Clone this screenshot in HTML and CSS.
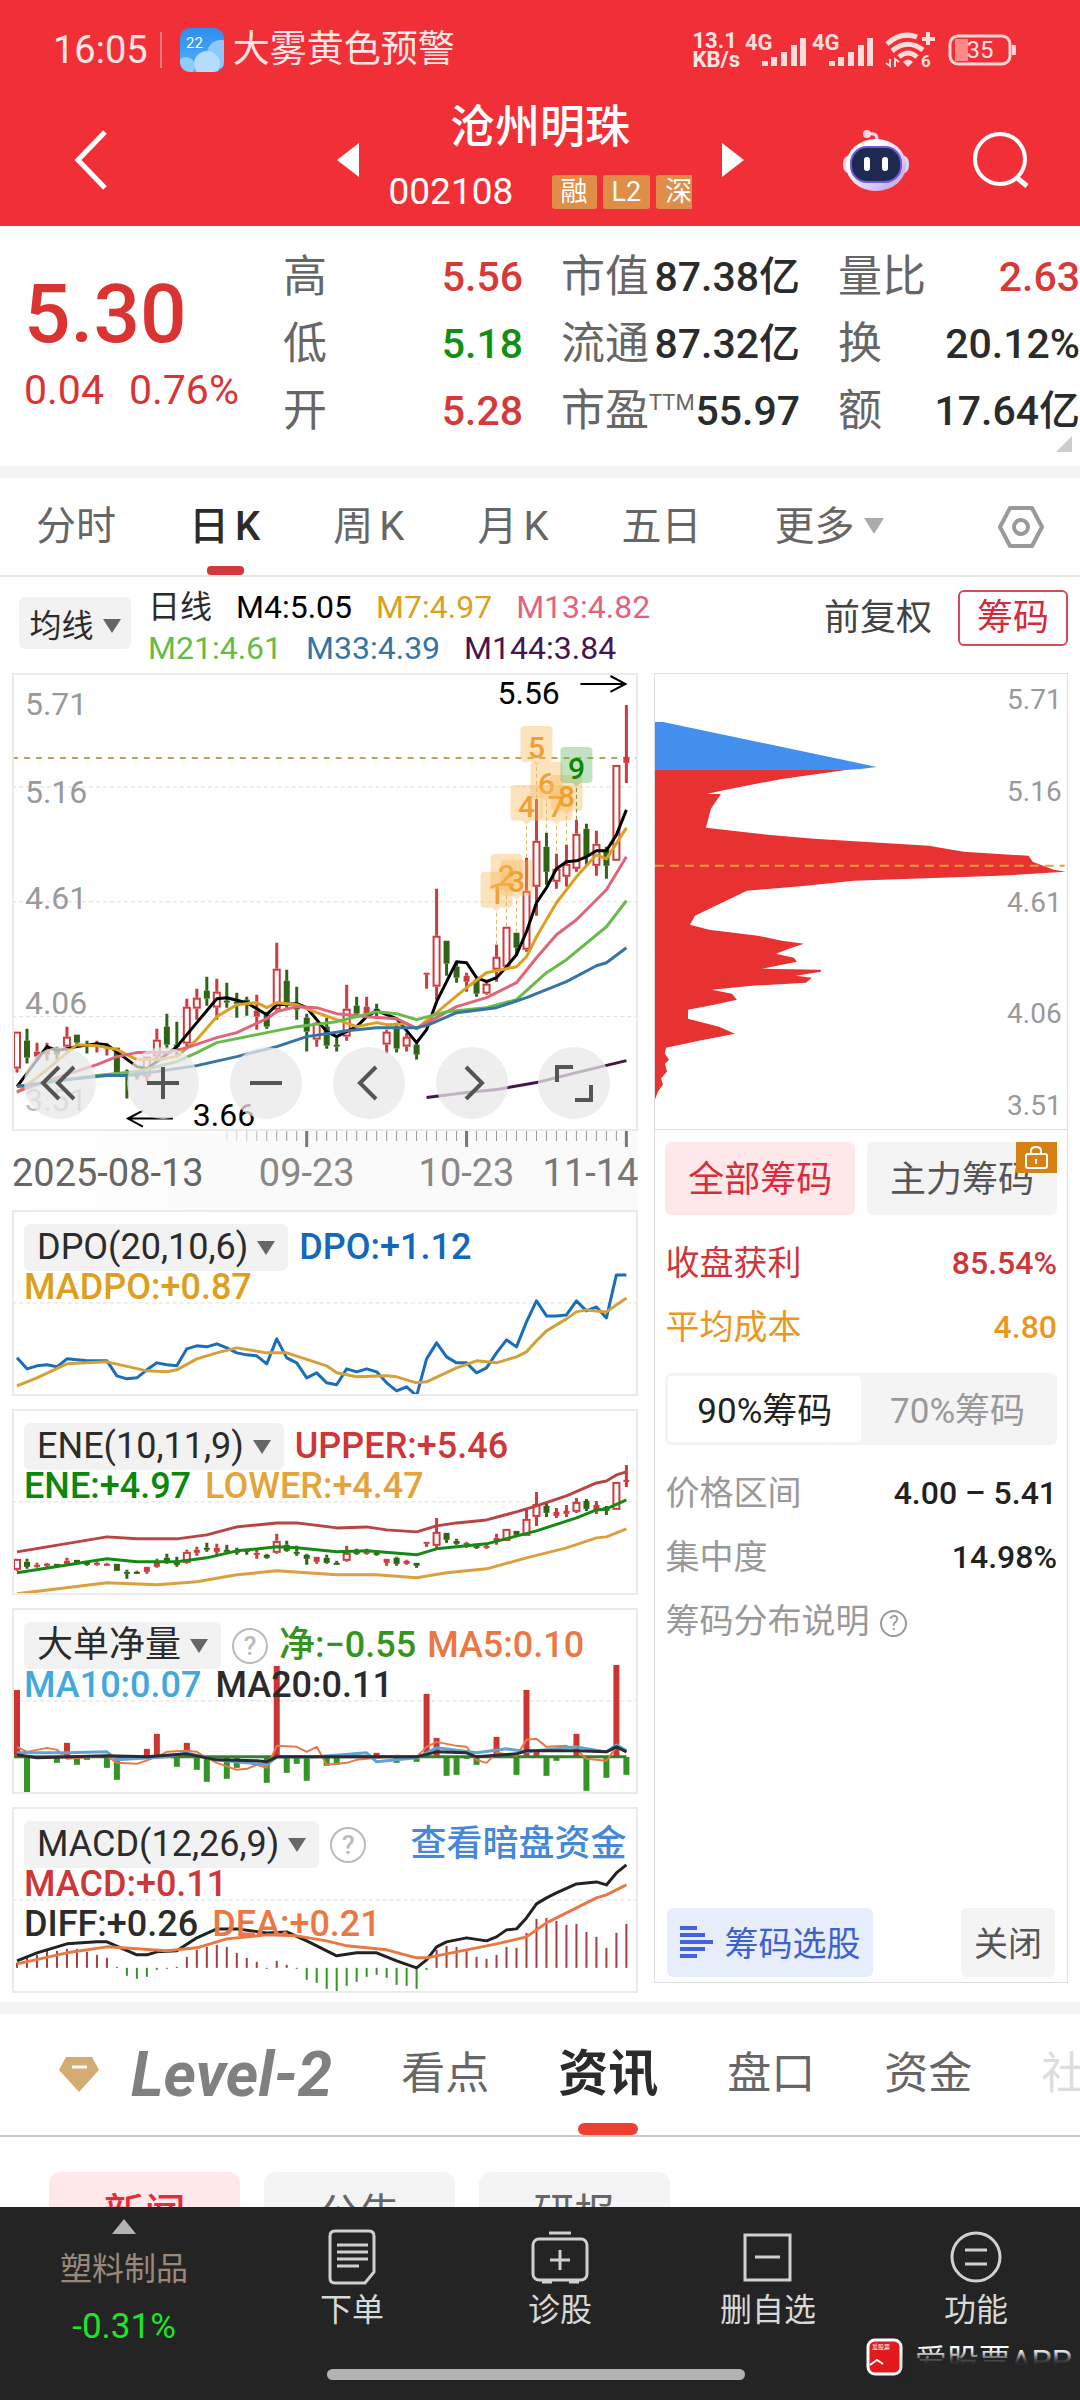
FILE: index.html
```html
<!DOCTYPE html>
<html lang="zh-CN">
<head>
    <meta charset="UTF-8">
    <meta name="viewport" content="width=device-width, initial-scale=1.0">
    <title>沧州明珠 002108</title>
    <link rel="stylesheet" href="styles.css">
</head>
<body>
    <header class="header">
        <div class="status">
            <span class="time">16:05</span>
            <span class="divider"></span>
            <svg class="weather" viewBox="0 0 44 44">
                <defs>
                    <linearGradient id="sky" x1="0" y1="0" x2="0" y2="1"><stop offset="0" stop-color="#2f8df0"/><stop offset="1" stop-color="#4db5fa"/></linearGradient>
                    <clipPath id="round"><rect width="44" height="44" rx="10"/></clipPath>
                </defs>
                <g clip-path="url(#round)">
                    <rect width="44" height="44" fill="url(#sky)"/>
                    <circle cx="41" cy="26" r="14" fill="#8cc9f8"/>
                    <circle cx="6" cy="38" r="9" fill="#8fcdf9"/>
                    <circle cx="27" cy="36" r="13" fill="#b5dcfb"/>
                </g>
                <text x="6" y="20" font-size="15" fill="#fff">22</text>
            </svg>
            <span class="alert">大雾黄色预警</span>
            <div class="signals">
                <span class="speed">13.1<br>KB/s</span>
                <svg width="62" height="38" viewBox="0 0 62 38" fill="#ffdcdc">
                    <text x="0" y="19" font-size="22" font-weight="700">4G</text>
                    <path d="M17 30h6v5h-6zM26 26h6v9h-6zM36 21h6v14h-6zM46 14h6v21h-6zM55 7h6v28h-6z"/>
                </svg>
                <svg width="62" height="38" viewBox="0 0 62 38" fill="#ffdcdc">
                    <text x="0" y="19" font-size="22" font-weight="700">4G</text>
                    <path d="M17 30h6v5h-6zM26 26h6v9h-6zM36 21h6v14h-6zM46 14h6v21h-6zM55 7h6v28h-6z"/>
                </svg>
                <svg class="wifi" width="50" height="38" viewBox="0 0 50 38" fill="none" stroke="#ffdcdc">
                    <path d="M2 13Q16 0 32 6M7 20Q22 7 38 19M14 26Q23 18 32 26" stroke-width="5"/>
                    <path d="M18 31q5-5 10 0l-5 5z" fill="#ffdcdc" stroke="none"/>
                    <path d="M43 1v13M37 8h13" stroke-width="4"/>
                    <path d="M5 28v7l-4-3M10 36v-8l4 3" stroke-width="2"/>
                    <text x="36" y="36" font-size="17" font-weight="700" fill="#ffdcdc" stroke="none">6</text>
                </svg>
                <svg width="70" height="32" viewBox="0 0 70 32">
                    <rect x="7" y="5" width="13" height="22" fill="#f88"/>
                    <rect x="2" y="2" width="60" height="28" rx="8" fill="none" stroke="#ffd5d5" stroke-width="3"/>
                    <path d="M66 11v10" stroke="#ffd5d5" stroke-width="4"/>
                    <text x="32" y="24" font-size="24" text-anchor="middle" fill="#ffe3e3">35</text>
                </svg>
            </div>
        </div>
        <div class="titlebar">
            <button class="back" aria-label="返回">
                <svg width="34" height="60" viewBox="0 0 34 60"><path d="M31 2L4 30l27 28" fill="none" stroke="#fff" stroke-width="5"/></svg>
            </button>
            <div class="stock">
                <button aria-label="上一只"><svg width="22" height="34" viewBox="0 0 22 34"><path d="M22 0v34L0 17z" fill="#fff"/></svg></button>
                <div class="stock-name">
                    <h1>沧州明珠</h1>
                    <div class="stock-code">
                        <span>002108</span>
                        <div class="tags"><i>融</i><i>L2</i><i>深</i></div>
                    </div>
                </div>
                <button aria-label="下一只"><svg width="22" height="34" viewBox="0 0 22 34"><path d="M0 0v34l22-17z" fill="#fff"/></svg></button>
            </div>
            <div class="actions">
                <button aria-label="助手">
                    <svg width="68" height="62" viewBox="0 0 68 62">
                        <defs><linearGradient id="shell" x1="0" y1="0" x2="1" y2="1"><stop offset="0.3" stop-color="#fff"/><stop offset="0.8" stop-color="#c9b4f5"/></linearGradient></defs>
                        <path d="M26 5q10-2 9 7" fill="none" stroke="#ffd5e2" stroke-width="3"/>
                        <circle cx="25" cy="5" r="4" fill="#ffd5e2"/>
                        <rect x="1" y="26" width="66" height="19" rx="8" fill="#ddd3fa"/>
                        <ellipse cx="34" cy="36" rx="30" ry="26" fill="url(#shell)"/>
                        <rect x="9" y="18" width="50" height="35" rx="16" fill="#1e2950" stroke="#6f58d8" stroke-width="2"/>
                        <rect x="22" y="28" width="6" height="14" rx="3" fill="#fff"/>
                        <rect x="40" y="28" width="6" height="14" rx="3" fill="#fff"/>
                    </svg>
                </button>
                <button aria-label="搜索">
                    <svg width="58" height="58" viewBox="0 0 58 58" fill="none" stroke="#fff" stroke-width="4"><circle cx="28" cy="28" r="25"/><path d="M44 46l11 9" stroke-width="5"/></svg>
                </button>
            </div>
        </div>
    </header>

    <section class="quote">
        <div class="price">
            <strong>5.30</strong>
            <div class="change"><span>0.04</span><span>0.76%</span></div>
        </div>
        <dl>
            <div><dt>高</dt><dd class="up">5.56</dd></div>
            <div><dt>低</dt><dd class="down">5.18</dd></div>
            <div><dt>开</dt><dd class="up">5.28</dd></div>
        </dl>
        <dl>
            <div><dt>市值</dt><dd>87.38亿</dd></div>
            <div><dt>流通</dt><dd>87.32亿</dd></div>
            <div><dt>市盈<sup>TTM</sup></dt><dd>55.97</dd></div>
        </dl>
        <dl class="last">
            <div><dt>量比</dt><dd class="up">2.63</dd></div>
            <div><dt>换</dt><dd>20.12%</dd></div>
            <div><dt>额</dt><dd>17.64亿</dd></div>
        </dl>
        <span class="corner"></span>
    </section>

    <nav class="period">
        <button>分时</button>
        <button class="active">日<span class="k">K</span></button>
        <button>周<span class="k">K</span></button>
        <button>月<span class="k">K</span></button>
        <button>五日</button>
        <button>更多<span class="caret"></span></button>
        <button class="setting" aria-label="设置">
            <svg width="46" height="44" viewBox="0 0 46 44" fill="none" stroke="#999" stroke-width="4" stroke-linejoin="round"><path d="M12 3h22l10 19-10 19H12L2 22z"/><circle cx="23" cy="22" r="7"/></svg>
        </button>
    </nav>

    <section class="ma-bar">
        <button class="pill">均线<span class="caret"></span></button>
        <div class="ma-list">
            <span>日线</span>
            <span class="c-black">M4:5.05</span>
            <span class="c-gold">M7:4.97</span>
            <span class="c-pink">M13:4.82</span>
            <span class="c-lime">M21:4.61</span>
            <span class="c-steel">M33:4.39</span>
            <span class="c-purple">M144:3.84</span>
        </div>
        <button class="plain">前复权</button>
        <button class="chip-toggle">筹码</button>
    </section>

    <main class="board">
        <div class="charts">
            <div class="chart main-chart">
                <svg id="kline" viewBox="0 0 627 457"></svg>
                <div class="tools">
                    <button aria-label="最左"><svg viewBox="0 0 72 72"><path d="M35 20L19 36l16 16M50 20L34 36l16 16"/></svg></button>
                    <button aria-label="放大"><svg viewBox="0 0 72 72"><path d="M36 20v32M20 36h32"/></svg></button>
                    <button aria-label="缩小"><svg viewBox="0 0 72 72"><path d="M20 36h32"/></svg></button>
                    <button aria-label="左移"><svg viewBox="0 0 72 72"><path d="M43 20L27 36l16 16"/></svg></button>
                    <button aria-label="右移"><svg viewBox="0 0 72 72"><path d="M30 20l16 16-16 16"/></svg></button>
                    <button aria-label="全屏"><svg viewBox="0 0 72 72"><path d="M19 35V20h16M53 38v15H37"/></svg></button>
                </div>
            </div>
            <div class="axis"><svg id="axis" viewBox="0 0 627 80"></svg></div>

            <div class="chart sub">
                <svg id="dpo" viewBox="0 0 627 186"></svg>
                <div class="legend">
                    <div><button class="pill">DPO(20,10,6)<span class="caret"></span></button><span class="c-blue">DPO:+1.12</span></div>
                    <div><span class="c-gold">MADPO:+0.87</span></div>
                </div>
            </div>
            <div class="chart sub">
                <svg id="ene" viewBox="0 0 627 186"></svg>
                <div class="legend">
                    <div><button class="pill">ENE(10,11,9)<span class="caret"></span></button><span class="c-red">UPPER:+5.46</span></div>
                    <div><span class="c-green">ENE:+4.97</span><span class="c-amber">LOWER:+4.47</span></div>
                </div>
            </div>
            <div class="chart sub">
                <svg id="net" viewBox="0 0 627 186"></svg>
                <div class="legend">
                    <div><button class="pill">大单净量<span class="caret"></span></button><button class="help">?</button><span class="c-leaf">净:−0.55</span><span class="c-orange">MA5:0.10</span></div>
                    <div><span class="c-sky">MA10:0.07</span><span>MA20:0.11</span></div>
                </div>
            </div>
            <div class="chart sub">
                <svg id="macd" viewBox="0 0 627 186"></svg>
                <div class="legend">
                    <div><button class="pill">MACD(12,26,9)<span class="caret"></span></button><button class="help">?</button><a class="dark-pool" href="#">查看暗盘资金</a></div>
                    <div><span class="c-red">MACD:+0.11</span></div>
                    <div><span>DIFF:+0.26</span><span class="c-orange">DEA:+0.21</span></div>
                </div>
            </div>
        </div>

        <aside class="chips">
            <div class="dist"><svg id="dist" viewBox="0 0 412 456"></svg></div>
            <div class="chips-body">
                <div class="scope">
                    <button class="active">全部筹码</button>
                    <button>主力筹码
                        <span class="lock"><svg width="25" height="25" viewBox="0 0 25 25" fill="none" stroke="#fff" stroke-width="2"><rect x="2" y="9" width="21" height="14" rx="2"/><path d="M7 9V6q0-4 5-4t5 4v3M12 14v5"/></svg></span>
                    </button>
                </div>
                <p class="row c-red"><span>收盘获利</span><b>85.54%</b></p>
                <p class="row c-cost"><span>平均成本</span><b>4.80</b></p>
                <div class="segment">
                    <button class="active">90%筹码</button>
                    <button>70%筹码</button>
                </div>
                <p class="row muted"><span>价格区间</span><b>4.00 – 5.41</b></p>
                <p class="row muted"><span>集中度</span><b>14.98%</b></p>
                <p class="row muted"><span>筹码分布说明<button class="help small">?</button></span></p>
                <div class="chips-foot">
                    <button class="pick">
                        <svg width="34" height="32" viewBox="0 0 34 32" fill="#4163dc"><path d="M0 0h17v4H0zM0 7h25v4H0zM0 14h33v4H0zM0 21h25v4H0zM0 28h17v4H0z"/></svg>筹码选股
                    </button>
                    <button class="close">关闭</button>
                </div>
            </div>
        </aside>
    </main>

    <nav class="info-tabs">
        <button class="level">
            <svg width="42" height="37" viewBox="0 0 42 37"><path d="M8 1h26l7 13-20 22L1 14z" fill="#d3ab73"/><path d="M14 11h15" stroke="#fff" stroke-width="3"/></svg>
            <em>Level-2</em>
        </button>
        <button>看点</button>
        <button class="active">资讯</button>
        <button>盘口</button>
        <button>资金</button>
        <button class="fade">社区</button>
    </nav>
    <div class="news-types">
        <button class="active">新闻</button>
        <button>公告</button>
        <button>研报</button>
    </div>

    <footer class="bottom">
        <a class="sector" href="#">
            <span class="arrow-up"></span>
            <span>塑料制品</span>
            <span class="sector-change">-0.31%</span>
        </a>
        <a href="#">
            <svg width="50" height="56" viewBox="0 0 50 56"><path d="M8 2h34q5 0 5 5v36L38 54H8q-5 0-5-5V7q0-5 5-5zM10 16h31M10 23h31M10 30h31M10 37h22"/></svg>
            下单
        </a>
        <a href="#">
            <svg width="58" height="56" viewBox="0 0 58 56"><rect x="2" y="10" width="54" height="41" rx="6"/><path d="M18 4h22M29 21v20M19 31h20M11 53h10M38 53h10"/></svg>
            诊股
        </a>
        <a href="#">
            <svg width="50" height="56" viewBox="0 0 50 56"><path d="M2 6h45v45H2zM12 28h25"/></svg>
            删自选
        </a>
        <a href="#">
            <svg width="52" height="56" viewBox="0 0 52 56"><circle cx="26" cy="28" r="24"/><path d="M15 21h22M15 35h22"/></svg>
            功能
        </a>
        <div class="watermark">
            <svg width="37" height="38" viewBox="0 0 37 38"><rect x="2" y="2" width="33" height="34" rx="7" fill="#e21a1d" stroke="#fff" stroke-width="3"/><path d="M4 27l7-5 6 4" fill="none" stroke="#fff" stroke-width="2"/><text x="6" y="11" font-size="6" fill="#fff">爱股票</text></svg>
            <span>爱股票APP</span>
        </div>
        <div class="home-bar"></div>
    </footer>

    <script src="chart.js"></script>
</body>
</html>
```
FILE: styles.css
```css
* {
    box-sizing: border-box;
}

body {
    margin: 0;
    font-family: Roboto, "Noto Sans CJK SC", sans-serif;
    background: #fff;
    color: #2b2b2b;
    height: 100vh;
    overflow: hidden;
}

button {
    font: inherit;
    color: inherit;
    background: none;
    border: none;
    padding: 0;
    cursor: pointer;
}

svg {
    display: block;
    flex-shrink: 0;
}

a {
    color: inherit;
    text-decoration: none;
}

i {
    font-style: normal;
}

.caret {
    display: inline-block;
    border: 9px solid transparent;
    border-top: 14px solid #666;
    border-bottom: 0;
    margin-left: 9px;
    vertical-align: 4px;
}

/* Header */
.header {
    background: #f12f36;
    color: #fff;
    padding-top: 26px;
}

.status {
    display: flex;
    align-items: center;
    height: 48px;
    padding: 0 62px 0 53px;
    color: #ffe6e6;
}

.time {
    font-size: 38px;
}

.divider {
    width: 2px;
    height: 36px;
    margin: 0 18px 0 12px;
    background: #f87a7e;
}

.weather {
    width: 44px;
    height: 44px;
}

.alert {
    font-size: 37px;
    line-height: 44px;
    margin-left: 9px;
}

.signals {
    display: flex;
    align-items: center;
    gap: 5px;
    margin-left: auto;
}

.signals .wifi {
    margin: 0 8px 0 6px;
}

.speed {
    font-size: 22px;
    line-height: 19px;
    font-weight: 700;
}

.titlebar {
    display: grid;
    grid-template-columns: 1fr auto 1fr;
    align-items: center;
    height: 152px;
    padding-top: 20px;
}

.back {
    justify-self: start;
    margin-left: 74px;
}

.stock {
    display: flex;
    align-items: center;
    gap: 30px;
}

.stock-name {
    width: 303px;
}

.stock-name h1 {
    margin: 0;
    font-size: 45px;
    line-height: 64px;
    font-weight: 500;
    text-align: center;
}

.stock-code {
    display: flex;
    justify-content: space-between;
    align-items: center;
    font-size: 37px;
    line-height: 64px;
}

.tags {
    display: flex;
    gap: 6px;
    width: 140px;
    overflow: hidden;
    font-size: 27px;
    line-height: 34px;
}

.tags i {
    flex-shrink: 0;
    padding: 0 9px;
    background: #e08d47;
    border-radius: 3px;
}

.actions {
    display: flex;
    align-items: center;
    gap: 62px;
    justify-self: end;
    margin-right: 50px;
}

/* Quote */
.quote {
    position: relative;
    display: grid;
    grid-template-columns: 259fr 278fr 277fr 242fr;
    padding: 18px 0 21px 24px;
    border-bottom: 12px solid #f4f4f4;
}

.price {
    color: #d93432;
    padding-top: 24px;
}

.price strong {
    display: block;
    font-size: 82px;
    line-height: 92px;
    font-weight: 500;
}

.change {
    display: flex;
    gap: 25px;
    font-size: 41px;
    line-height: 60px;
}

.quote dl {
    margin: 0;
    padding-right: 38px;
    line-height: 67px;
}

.quote dl.last {
    padding-right: 0;
}

.quote dl div {
    display: flex;
    justify-content: space-between;
    white-space: nowrap;
}

.quote dt {
    font-size: 44px;
    color: #666;
}

.quote dt sup {
    font-size: 22px;
    line-height: 22px;
    vertical-align: 16px;
}

.quote dd {
    margin: 0;
    font-size: 41px;
    font-weight: 500;
}

.up {
    color: #d63a38;
}

.down {
    color: #109010;
}

.corner {
    position: absolute;
    right: 8px;
    bottom: 14px;
    border-left: 16px solid transparent;
    border-bottom: 16px solid #ccc;
}

/* Period tabs */
.period {
    display: flex;
    align-items: center;
    gap: 73px;
    height: 99px;
    padding: 0 36px;
    border-bottom: 2px solid #e6e6e6;
    color: #666;
    font-size: 40px;
}

.period button {
    position: relative;
    line-height: 96px;
    white-space: nowrap;
}

.period .k {
    margin-left: 6px;
}

.period .active {
    color: #2b2b2b;
    font-weight: 500;
}

.period .active::after,
.info-tabs .active::after {
    content: "";
    position: absolute;
    left: 50%;
    bottom: 0;
    width: 37px;
    height: 9px;
    margin-left: -18px;
    border-radius: 4px;
    background: #d5373c;
}

.period .caret {
    border-width: 16px 10px 0;
    border-top-color: #aaa;
    vertical-align: 6px;
}

.period .setting {
    margin-left: auto;
}

/* Moving average bar */
.ma-bar {
    display: flex;
    align-items: center;
    height: 96px;
    padding: 0 12px 14px 19px;
    font-size: 32px;
}

.pill {
    background: #f2f2f2;
    border-radius: 6px;
    white-space: nowrap;
}

.ma-bar .pill {
    width: 112px;
    height: 52px;
    margin-top: 10px;
}

.ma-list {
    flex: 1;
    display: flex;
    flex-wrap: wrap;
    column-gap: 24px;
    padding-top: 20px;
    padding-left: 17px;
    padding-right: 140px;
    line-height: 41px;
}

.ma-bar .plain {
    font-size: 36px;
    line-height: 50px;
    margin-right: 26px;
    color: #444;
}

.chip-toggle {
    width: 110px;
    height: 56px;
    font-size: 36px;
    line-height: 50px;
    color: #d5293c;
    border: 2px solid #d5495a;
    border-radius: 6px;
}

.c-black { color: #000; }
.c-gold { color: #dd9f20; }
.c-pink { color: #e2647a; }
.c-lime { color: #67bb4a; }
.c-steel { color: #3575a3; }
.c-purple { color: #451451; }
.c-blue { color: #1268bd; }
.c-red { color: #ce3639; }
.c-green { color: #0b870b; }
.c-amber { color: #e5a43a; }
.c-leaf { color: #35931f; }
.c-orange { color: #e97845; }
.c-sky { color: #43a9dd; }
.c-cost { color: #eb971f; }

/* Charts */
.board {
    display: flex;
    gap: 16px;
    padding: 0 12px 9px;
    border-bottom: 12px solid #f4f4f4;
}

.charts {
    flex: 627;
    min-width: 0;
}

.chart {
    position: relative;
    border: 2px solid #ebebeb;
    overflow: hidden;
}

.chart > svg {
    position: absolute;
    inset: -2px;
    width: calc(100% + 4px);
}

.main-chart {
    height: 458px;
}

.tools {
    position: absolute;
    left: 10px;
    right: 26px;
    bottom: 10px;
    display: flex;
    justify-content: space-between;
}

.tools button {
    width: 72px;
    height: 72px;
    border-radius: 50%;
    background: rgba(232, 232, 232, 0.75);
}

.tools path {
    fill: none;
    stroke: #555;
    stroke-width: 4;
}

.axis {
    height: 79px;
    background: linear-gradient(to right, #fff, #fafafa 40%);
}

.sub {
    height: 186px;
    margin-bottom: 13px;
}

.sub:last-child {
    margin-bottom: 0;
}

.legend {
    position: relative;
    padding: 12px 10px 0;
    font-size: 36px;
    font-weight: 500;
}

.legend div {
    display: flex;
    gap: 14px;
    line-height: 40px;
    white-space: nowrap;
}

.legend div:first-child {
    align-items: center;
    gap: 11px;
    margin-bottom: -4px;
    line-height: 47px;
}

.legend .pill {
    padding: 0 13px;
    font-weight: 400;
}

.help {
    width: 36px;
    height: 36px;
    border: 2px solid #bbb;
    border-radius: 50%;
    color: #bbb;
    font-size: 26px;
    line-height: 32px;
}

.help.small {
    width: 27px;
    height: 27px;
    margin-left: 11px;
    border-color: #999;
    color: #999;
    font-size: 20px;
    line-height: 22px;
    vertical-align: 3px;
}

.dark-pool {
    margin-left: auto;
    color: #4587d8;
}

/* Chip distribution */
.chips {
    flex: 412;
    min-width: 0;
    display: flex;
    flex-direction: column;
    margin-bottom: 10px;
    border: 1px solid #ddd;
}

.dist {
    height: 456px;
    border-bottom: 1px solid #ddd;
}

.dist svg {
    width: 100%;
    margin-left: -1px;
}

.chips-body {
    flex: 1;
    display: flex;
    flex-direction: column;
    padding: 12px 10px 5px;
}

.scope {
    display: grid;
    grid-template-columns: 1fr 1fr;
    gap: 12px;
    margin-bottom: 16px;
}

.scope button {
    position: relative;
    height: 73px;
    padding-bottom: 5px;
    font-size: 36px;
    border-radius: 6px;
    background: #f4f4f4;
    color: #555;
}

.scope .active {
    background: #ffe8ea;
    color: #d82d3c;
}

.scope .lock {
    position: absolute;
    top: 0;
    right: 0;
    width: 41px;
    height: 31px;
    padding: 3px 8px;
    background: #d58114;
}

.row {
    display: flex;
    justify-content: space-between;
    margin: 0;
    font-size: 34px;
    line-height: 64px;
}

.row b {
    font-size: 32px;
    font-weight: 500;
}

.muted {
    color: #999;
}

.muted b {
    color: #222;
}

.segment {
    display: grid;
    grid-template-columns: 1fr 1fr;
    height: 72px;
    margin: 14px 0 16px;
    padding: 3px;
    background: #f4f4f4;
    border-radius: 6px;
    color: #999;
    font-size: 35px;
}

.segment button {
    padding-bottom: 4px;
}

.segment .active {
    background: #fff;
    color: #222;
    border-radius: 4px;
}

.chips-foot {
    display: flex;
    justify-content: space-between;
    margin-top: auto;
    padding: 0 2px;
    font-size: 34px;
}

.chips-foot button {
    height: 69px;
    padding: 0 13px 2px;
    border-radius: 6px;
    background: #f4f4f4;
    color: #555;
}

.chips-foot .pick {
    display: flex;
    align-items: center;
    gap: 10px;
    background: #e7edfb;
    color: #3d62cc;
}

/* Info tabs */
.info-tabs {
    display: flex;
    align-items: center;
    gap: 69px;
    height: 123px;
    padding-left: 58px;
    overflow: hidden;
    border-bottom: 2px solid #c8c8c8;
    color: #666;
    font-size: 44px;
}

.info-tabs button {
    position: relative;
    flex-shrink: 0;
    line-height: 121px;
}

.info-tabs .level {
    display: flex;
    align-items: center;
    gap: 31px;
}

.level em {
    font-size: 62px;
    font-weight: 700;
    color: #808080;
}

.info-tabs .active {
    font-size: 50px;
    font-weight: 700;
    color: #2b2b2b;
}

.info-tabs .active::after {
    width: 60px;
    height: 12px;
    margin-left: -30px;
    border-radius: 6px;
    background: #f04030;
}

.info-tabs .fade {
    color: #ddd;
}

.news-types {
    display: flex;
    gap: 24px;
    padding: 35px 49px 0;
}

.news-types button {
    width: 191px;
    height: 76px;
    border-radius: 12px;
    background: #f4f4f4;
    color: #666;
    font-size: 41px;
}

.news-types .active {
    background: #ffe8ea;
    color: #e52a3a;
    font-weight: 500;
}

/* Bottom bar */
.bottom {
    position: fixed;
    left: 0;
    right: 0;
    bottom: 0;
    display: grid;
    grid-template-columns: 248fr 208fr 208fr 208fr 208fr;
    height: 193px;
    background: #242424;
    color: #d8d8d8;
    font-size: 32px;
}

.bottom a {
    display: flex;
    flex-direction: column;
    align-items: center;
    padding-top: 22px;
    line-height: 50px;
}

.bottom a svg {
    fill: none;
    stroke: #d0d0d0;
    stroke-width: 3;
}

.bottom .sector {
    padding-top: 12px;
    color: #9a897a;
}

.arrow-up {
    border: 12px solid transparent;
    border-top: 0;
    border-bottom: 15px solid #b3b3b3;
    margin-bottom: 10px;
}

.sector-change {
    margin-top: 8px;
    font-size: 35px;
    color: #1de52a;
}

.watermark {
    position: absolute;
    right: 8px;
    bottom: 18px;
    display: flex;
    gap: 12px;
    height: 44px;
    overflow: hidden;
    color: #fff;
    font-size: 32px;
    line-height: 46px;
}

.watermark::after {
    content: "";
    position: absolute;
    left: 40px;
    right: -10px;
    top: 18px;
    height: 40px;
    background: #242424;
    filter: blur(4px);
}

.home-bar {
    position: absolute;
    left: 50%;
    bottom: 20px;
    width: 418px;
    height: 11px;
    margin-left: -213px;
    border-radius: 6px;
    background: #b3b3b3;
}
```
FILE: chart.js
```js
const RED = '#cf3a3e';
const GREEN = '#2f6416';
const x = i => 5 + i * 10;

// [high, body top, body bottom, low, up?]
const candles = [
    [359, 359, 396, 400, 1], [356, 368, 385, 391, 0], [370, 379, 384, 388, 1], [370, 376, 382, 388, 1],
    [374, 375, 382, 387, 0], [354, 364, 374, 380, 1], [362, 362, 370, 374, 0], [368, 372, 374, 381, 0],
    [368, 372, 374, 380, 1], [371, 374, 376, 383, 1], [375, 375, 400, 400, 0], [397, 401, 402, 426, 0],
    [399, 402, 403, 407, 0], [384, 384, 404, 409, 1], [356, 367, 384, 387, 1], [341, 354, 372, 376, 0],
    [349, 372, 374, 385, 0], [326, 334, 371, 374, 1], [316, 325, 336, 347, 1], [304, 318, 326, 333, 0],
    [306, 319, 335, 347, 1], [310, 328, 330, 335, 0], [320, 329, 330, 345, 0], [324, 327, 332, 343, 0],
    [322, 338, 344, 357, 1], [339, 342, 354, 356, 0], [270, 296, 337, 340, 1], [297, 308, 330, 335, 0],
    [314, 332, 337, 347, 0], [341, 345, 359, 379, 0], [349, 350, 367, 374, 1], [345, 354, 373, 376, 0],
    [365, 372, 374, 379, 0], [312, 336, 364, 368, 1], [324, 333, 341, 344, 0], [324, 334, 341, 344, 1],
    [331, 336, 339, 346, 0], [357, 359, 372, 381, 1], [350, 354, 376, 380, 0], [360, 364, 374, 379, 1],
    [370, 372, 382, 387, 0], [300, 300, 302, 316, 1], [216, 263, 314, 327, 1], [268, 268, 291, 303, 0],
    [290, 294, 305, 310, 0], [300, 303, 309, 319, 1], [305, 307, 321, 324, 0], [307, 311, 321, 322, 1],
    [272, 284, 297, 309, 1], [254, 254, 294, 297, 1], [260, 260, 275, 283, 0], [185, 218, 277, 279, 1],
    [126, 168, 214, 243, 1], [160, 174, 199, 212, 0], [181, 196, 209, 216, 1], [172, 191, 204, 214, 1],
    [147, 161, 196, 199, 1], [151, 156, 184, 192, 0], [158, 171, 193, 203, 1], [174, 177, 193, 206, 0],
    [92, 92, 188, 188, 1], [32, 84, 90, 110, 1]
];

function line(points, color, width = 3) {
    const d = points.map(([i, y]) => `${x(i)},${y}`).join(' ');
    return `<polyline points="${d}" fill="none" stroke="${color}" stroke-width="${width}" stroke-linejoin="round"/>`;
}

function grid(y, color = '#ddd', dash = '4 3', width = 1) {
    return `<path d="M0 ${y}H627" stroke="${color}" stroke-width="${width}" stroke-dasharray="${dash}"/>`;
}

function drawCandles(map) {
    return candles.map(([h, t, b, l, up], i) => {
        const [high, top, bottom, low] = [h, t, b, l].map(map);
        const height = Math.max(bottom - top, 2);
        const color = up ? RED : GREEN;
        const hollow = up && height > 7;
        return `<path d="M${x(i)} ${high}V${top}M${x(i)} ${top + height}V${low}" stroke="${color}" stroke-width="3"/>` +
            (hollow
                ? `<rect x="${x(i) - 3}" y="${top + 1}" width="6" height="${height - 2}" fill="#fff" stroke="${color}" stroke-width="2"/>`
                : `<rect x="${x(i) - 3}" y="${top}" width="6" height="${height}" fill="${color}"/>`);
    }).join('');
}

function bars(list, zero, width, up, down) {
    return list.map(([i, y]) =>
        `<rect x="${x(i) - width / 2}" y="${Math.min(y, zero)}" width="${width}" height="${Math.abs(y - zero)}" fill="${y < zero ? up : down}"/>`
    ).join('');
}

function text(px, y, value, size, color, anchor = 'start') {
    return `<text x="${px}" y="${y}" font-size="${size}" fill="${color}" text-anchor="${anchor}">${value}</text>`;
}

function draw(id, html) {
    document.getElementById(id).innerHTML = html;
}

// Nine-turn marks: [label, index, box top]
const marks = [['1', 48, 199], ['2', 49, 181], ['3', 50, 187], ['4', 51, 112], ['5', 52, 53], ['6', 53, 89], ['7', 54, 112], ['8', 55, 102], ['9', 56, 74]];

function drawMarks() {
    return marks.map(([label, i, y]) => {
        const last = label === '9';
        const fill = last ? '#63b866' : '#f7b95c';
        const c = x(i);
        return `<path d="M${c} ${y + 41}V${candles[i][0]}" stroke="${last ? '#6a9a40' : '#ddb860'}" stroke-dasharray="4 3"/>` +
            `<path d="M${c - 12} ${y}h24q4 0 4 4v28q0 4-4 4h-8l-4 4-4-4h-8q-4 0-4-4v-28q0-4 4-4z" fill="${fill}" opacity="0.4"/>` +
            `<text x="${c}" y="${y + 32}" font-size="30" font-weight="500" text-anchor="middle" fill="${last ? '#088a08' : '#f0a030'}">${label}</text>`;
    }).join('');
}

draw('kline',
    grid(114) + grid(229) + grid(344) + grid(85, '#b5a94c', '6 6', 2) +
    text(13, 42, '5.71', 32, '#999') + text(13, 130, '5.16', 32, '#999') + text(13, 236, '4.61', 32, '#999') +
    text(13, 341, '4.06', 32, '#999') + text(13, 438, '3.51', 32, '#bbb') +
    drawCandles(v => v) +
    line([[0, 414], [3, 374], [4, 378], [6, 374], [8, 371], [9, 372], [12, 394], [13, 396], [14, 389], [16, 374], [18, 350], [20, 326], [21, 325], [23, 330], [25, 342], [26, 332], [28, 331], [29, 335], [30, 347], [31, 359], [32, 364], [34, 354], [35, 344], [36, 338], [38, 346], [40, 370], [41, 357], [42, 329], [43, 309], [44, 289], [45, 290], [46, 305], [47, 309], [48, 305], [49, 294], [50, 282], [51, 259], [52, 230], [53, 215], [54, 196], [55, 189], [56, 188], [57, 184], [58, 178], [59, 178], [60, 162], [61, 137]], '#000') +
    line([[0, 420], [2, 405], [6, 372], [8, 373], [10, 377], [12, 387], [14, 387], [16, 384], [18, 367], [20, 344], [22, 332], [24, 330], [25, 335], [26, 330], [28, 332], [30, 340], [32, 347], [34, 354], [36, 350], [37, 352], [39, 351], [40, 356], [42, 340], [45, 315], [47, 300], [50, 294], [51, 284], [52, 264], [54, 230], [56, 204], [58, 182], [59, 186], [61, 155]], '#dd9f20') +
    line([[0, 419], [4, 405], [8, 392], [10, 384], [12, 380], [15, 380], [17, 375], [20, 365], [22, 360], [25, 346], [26, 339], [28, 334], [30, 335], [32, 341], [35, 344], [38, 346], [40, 356], [42, 345], [44, 334], [47, 325], [50, 310], [52, 285], [54, 262], [56, 247], [59, 217], [61, 184]], '#e2647a') +
    line([[0, 414], [5, 407], [8, 403], [12, 399], [16, 389], [18, 380], [20, 370], [24, 362], [28, 354], [32, 349], [36, 339], [38, 341], [40, 347], [43, 339], [47, 335], [50, 327], [53, 300], [55, 287], [59, 254], [61, 228]], '#67bb4a') +
    line([[0, 414], [5, 407], [9, 403], [11, 403], [14, 399], [18, 393], [22, 384], [26, 374], [29, 364], [33, 358], [36, 355], [40, 355], [41, 353], [44, 340], [48, 335], [51, 325], [55, 309], [58, 293], [59, 290], [61, 275]], '#3575a3') +
    line([[41, 425], [45, 420], [48, 417], [52, 410], [56, 400], [61, 388]], '#451451') +
    drawMarks() +
    text(486, 31, '5.56', 32, '#000') + text(181, 453, '3.66', 32, '#000') +
    '<path d="M569 11h44M599 3l15 8-15 8M161 446h-45M131 438l-15 8 15 8" fill="none" stroke="#000" stroke-width="2"/>'
);

let ticks = '';
for (let i = 21; i < 62; i++) {
    const major = i === 29 || i === 45 || i === 61;
    ticks += `<path d="M${x(i)} 0v${major ? 16 : 10}" stroke="${major ? '#777' : '#999'}" stroke-width="${major ? 3 : 1}" opacity="${Math.min(1, (i - 19) / 8)}"/>`;
}
draw('axis', ticks +
    text(0, 55, '2025-08-13', 38, '#666') + text(x(29), 55, '09-23', 38, '#888', 'middle') +
    text(x(45), 55, '10-23', 38, '#888', 'middle') + text(627, 55, '11-14', 38, '#777', 'end'));

const dpo = [148, 159, 156, 155, 157, 149, 150, 151, 151, 151, 166, 169, 168, 160, 153, 155, 156, 139, 136, 137, 134, 138, 143, 145, 146, 154, 129, 148, 153, 168, 163, 173, 175, 159, 162, 159, 162, 173, 181, 177, 186, 149, 133, 147, 153, 153, 163, 158, 143, 130, 137, 112, 91, 106, 106, 105, 91, 101, 97, 108, 65, 65];
draw('dpo', grid(93) +
    line(dpo.map((y, i) => [i, y]), '#1a6db8') +
    line([[0, 176], [2, 168], [5, 154], [9, 152], [13, 161], [15, 162], [16, 160], [18, 149], [20, 143], [22, 138], [25, 143], [27, 143], [31, 156], [32, 163], [34, 167], [37, 166], [38, 167], [40, 173], [41, 172], [44, 158], [46, 151], [48, 153], [50, 147], [51, 142], [52, 131], [53, 121], [55, 109], [56, 102], [57, 100], [59, 102], [61, 88]], '#d3a03a'));

draw('ene', grid(93) +
    drawCandles(v => Math.round(73 + (v - 92) * 0.29)) +
    line([[0, 143], [9, 128], [12, 130], [16, 130], [19, 126], [22, 118], [25, 115], [26, 114], [28, 114], [32, 119], [35, 118], [37, 121], [40, 123], [42, 117], [44, 114], [47, 111], [50, 103], [52, 97], [55, 87], [58, 74], [59, 72], [60, 66], [61, 63]], '#ba4444') +
    line([[0, 164], [9, 150], [12, 153], [16, 153], [19, 149], [22, 142], [26, 138], [28, 139], [32, 143], [35, 142], [40, 146], [42, 140], [47, 135], [52, 122], [56, 109], [58, 101], [59, 100], [61, 91]], '#148a14') +
    line([[0, 185], [9, 174], [14, 176], [18, 173], [22, 166], [26, 162], [32, 166], [36, 166], [40, 169], [43, 164], [47, 160], [51, 149], [55, 139], [58, 129], [59, 128], [61, 120]], '#dba03f'));

draw('net', grid(93) +
    bars([[0, 82], [1, 186], [4, 155], [5, 135], [6, 157], [7, 152], [9, 160], [10, 172], [13, 141], [14, 126], [16, 159], [17, 135], [18, 162], [19, 174], [21, 171], [22, 160], [25, 175], [26, 58], [27, 165], [28, 156], [29, 173], [31, 158], [32, 157], [36, 145], [38, 155], [40, 154], [41, 86], [42, 130], [43, 168], [44, 167], [45, 151], [46, 157], [48, 129], [50, 167], [51, 82], [52, 142], [53, 168], [54, 153], [56, 126], [57, 183], [59, 170], [60, 57], [61, 167]], 149, 6, '#cc3434', '#359427') +
    '<path d="M0 149H615" stroke="#35802a" stroke-width="3"/>' +
    line([[0, 139], [1, 144], [3, 140], [4, 142], [5, 151], [9, 148], [10, 155], [12, 156], [14, 149], [15, 144], [17, 143], [18, 144], [19, 150], [20, 155], [22, 162], [23, 161], [24, 157], [25, 160], [26, 138], [28, 139], [29, 144], [30, 139], [31, 157], [33, 155], [34, 152], [38, 148], [40, 149], [41, 139], [42, 134], [44, 138], [45, 139], [46, 152], [47, 155], [48, 145], [50, 148], [51, 132], [52, 131], [53, 139], [55, 138], [56, 142], [57, 151], [59, 153], [60, 139], [61, 144]], '#e97845', 2) +
    line([[0, 145], [5, 145], [9, 144], [10, 152], [15, 149], [17, 145], [20, 152], [25, 157], [26, 149], [30, 149], [35, 145], [36, 154], [40, 150], [42, 140], [46, 145], [49, 141], [51, 144], [56, 139], [59, 144], [60, 137], [61, 143]], '#62a3cf') +
    line([[0, 147], [2, 150], [9, 148], [13, 149], [17, 146], [20, 152], [24, 153], [25, 154], [26, 149], [40, 149], [42, 144], [45, 145], [46, 149], [50, 146], [51, 143], [56, 143], [59, 144], [60, 139], [61, 144]], '#2b2b35'));

draw('macd', grid(93) +
    bars([[0, 156], [1, 151], [2, 148], [3, 144], [4, 144], [5, 142], [6, 142], [7, 145], [8, 148], [9, 151], [10, 160], [11, 169], [12, 172], [13, 170], [14, 163], [15, 162], [16, 160], [17, 150], [18, 143], [19, 140], [20, 138], [21, 140], [22, 146], [23, 151], [24, 155], [25, 162], [26, 154], [27, 158], [28, 162], [29, 173], [30, 176], [31, 182], [32, 186], [33, 179], [34, 175], [35, 170], [36, 168], [37, 171], [38, 178], [39, 179], [40, 182], [41, 163], [42, 143], [43, 139], [44, 140], [45, 143], [46, 150], [47, 152], [48, 148], [49, 140], [50, 141], [51, 126], [52, 112], [53, 111], [54, 114], [55, 118], [56, 117], [57, 125], [58, 130], [59, 141], [60, 126], [61, 117]], 161, 2, '#a93c3c', '#359427') +
    line([[0, 154], [2, 146], [5, 137], [8, 135], [9, 135], [12, 148], [13, 148], [14, 145], [16, 144], [18, 131], [20, 122], [22, 122], [25, 126], [27, 125], [29, 134], [30, 139], [32, 149], [34, 146], [36, 146], [38, 154], [40, 161], [41, 153], [42, 140], [43, 135], [45, 131], [47, 134], [48, 130], [49, 123], [50, 122], [51, 111], [52, 97], [53, 91], [54, 86], [56, 77], [58, 75], [59, 78], [60, 66], [61, 58]], '#222') +
    line([[0, 157], [5, 146], [9, 140], [12, 142], [15, 144], [18, 141], [21, 132], [25, 128], [28, 129], [31, 134], [33, 139], [37, 143], [40, 151], [41, 151], [45, 143], [48, 137], [51, 130], [53, 116], [56, 101], [58, 91], [59, 88], [61, 78]], '#e97845'));

draw('dist',
    '<path d="M1 48H9L223 93L207 95L192 96H1z" fill="#438fee"/>' +
    '<path d="M1 96H192L128 105L66 117L53 120H67L57 135L52 154L105 160L160 165L275 172L310 178L375 182L379 188L400 196L412 198L345 202L200 207L152 212L93 217L70 228L41 242L36 251L55 256L104 262L128 267L150 270L135 275L122 280L140 284L143 288L108 295L167 296V298L142 302L158 304L152 309L98 312L58 316L78 320L83 326L60 331L34 336V345L65 353L81 360L45 367L12 374L11 380L15 386L11 390L13 398L7 405L9 411L4 418L1 426z" fill="#e83131"/>' +
    '<path d="M1 192H411" stroke="#e7a13a" stroke-width="2" stroke-dasharray="9 6"/>' +
    [['5.71', 35], ['5.16', 127], ['4.61', 238], ['4.06', 349], ['3.51', 441]].map(([v, y]) => text(408, y, v, 28, '#999', 'end')).join(''));
```
